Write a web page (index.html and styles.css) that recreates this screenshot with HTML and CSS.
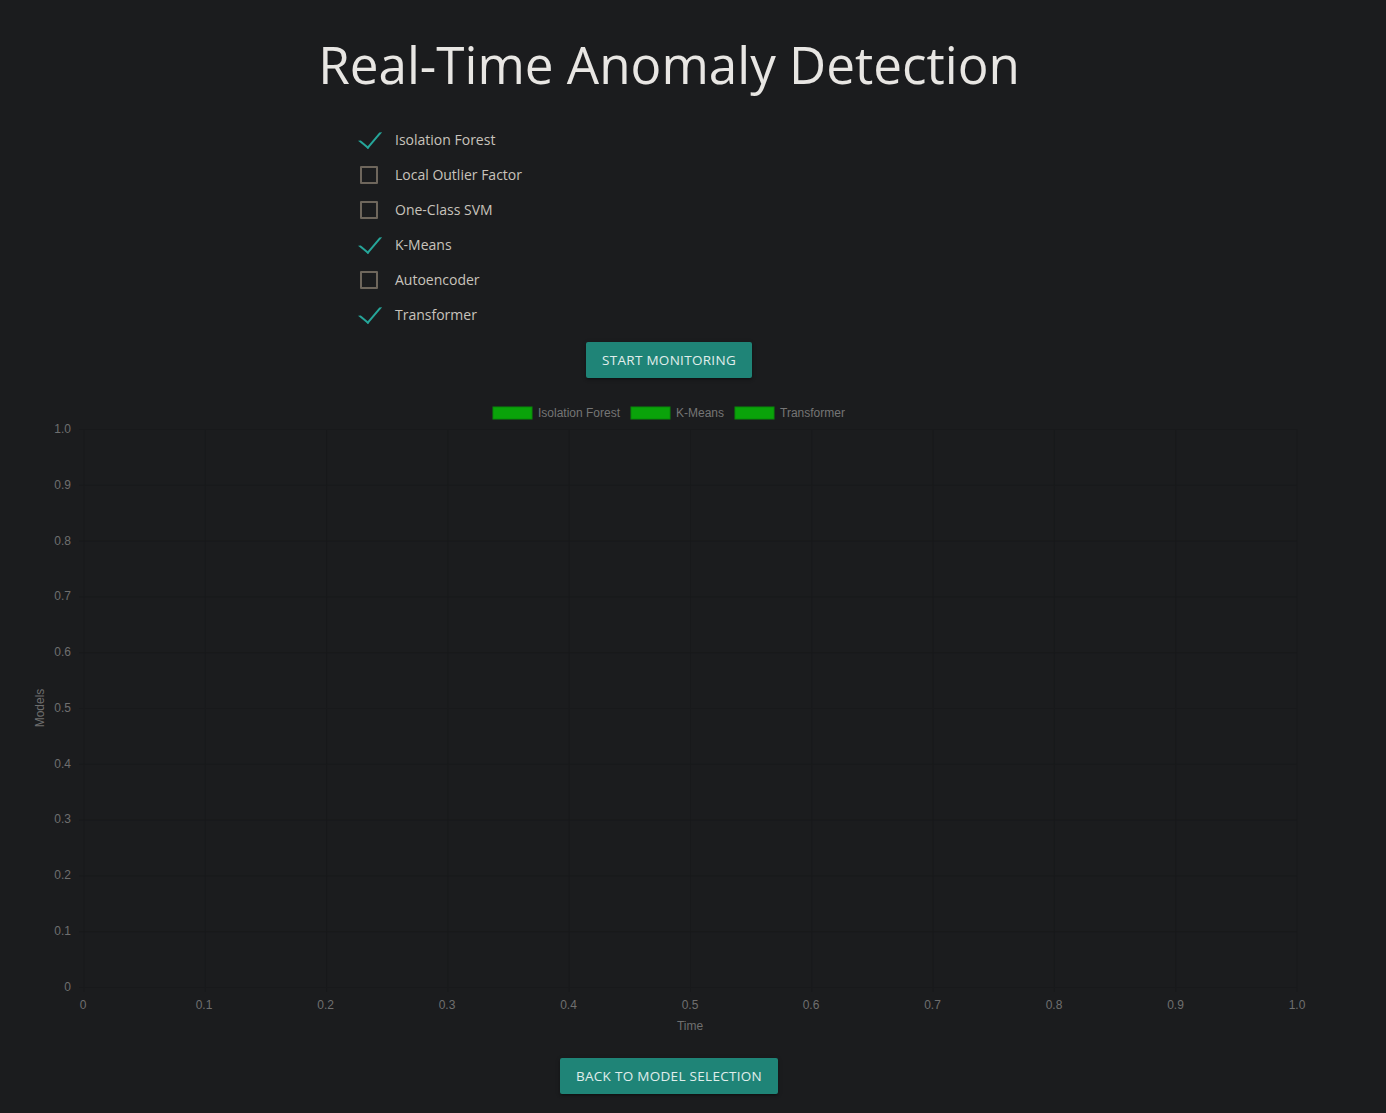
FILE: index.html
```html
<!DOCTYPE html>
<html lang="en">
<head>
<meta charset="utf-8">
<title>Real-Time Anomaly Detection</title>
<link rel="stylesheet" href="styles.css">
</head>
<body>
<div class="page">
  <h1 class="title">Real-Time Anomaly Detection</h1>

  <ul class="models">
    <li class="model"><span class="box checked"></span><span class="label">Isolation Forest</span></li>
    <li class="model"><span class="box"></span><span class="label">Local Outlier Factor</span></li>
    <li class="model"><span class="box"></span><span class="label">One-Class SVM</span></li>
    <li class="model"><span class="box checked"></span><span class="label">K-Means</span></li>
    <li class="model"><span class="box"></span><span class="label">Autoencoder</span></li>
    <li class="model"><span class="box checked"></span><span class="label">Transformer</span></li>
  </ul>

  <div class="actions">
    <button class="btn">Start Monitoring</button>
  </div>

  <svg class="chart" width="1338" height="650" viewBox="0 395 1338 650" xmlns="http://www.w3.org/2000/svg">
    <g class="legend">
      <rect x="493" y="407" width="39" height="12" fill="#0aa30a" stroke="#088a08" stroke-width="1"/>
      <text x="538" y="417">Isolation Forest</text>
      <rect x="631" y="407" width="39" height="12" fill="#0aa30a" stroke="#088a08" stroke-width="1"/>
      <text x="676" y="417">K-Means</text>
      <rect x="735" y="407" width="39" height="12" fill="#0aa30a" stroke="#088a08" stroke-width="1"/>
      <text x="780" y="417">Transformer</text>
    </g>
    <g class="grid">
      <line x1="84" y1="429" x2="84" y2="992"/>
      <line x1="205.3" y1="429" x2="205.3" y2="992"/>
      <line x1="326.6" y1="429" x2="326.6" y2="992"/>
      <line x1="447.9" y1="429" x2="447.9" y2="992"/>
      <line x1="569.2" y1="429" x2="569.2" y2="992"/>
      <line x1="690.5" y1="429" x2="690.5" y2="992"/>
      <line x1="811.8" y1="429" x2="811.8" y2="992"/>
      <line x1="933.1" y1="429" x2="933.1" y2="992"/>
      <line x1="1054.4" y1="429" x2="1054.4" y2="992"/>
      <line x1="1175.7" y1="429" x2="1175.7" y2="992"/>
      <line x1="1297" y1="429" x2="1297" y2="992"/>
      <line x1="79" y1="429.5" x2="1297" y2="429.5"/>
      <line x1="79" y1="485.3" x2="1297" y2="485.3"/>
      <line x1="79" y1="541.1" x2="1297" y2="541.1"/>
      <line x1="79" y1="596.9" x2="1297" y2="596.9"/>
      <line x1="79" y1="652.7" x2="1297" y2="652.7"/>
      <line x1="79" y1="708.5" x2="1297" y2="708.5"/>
      <line x1="79" y1="764.3" x2="1297" y2="764.3"/>
      <line x1="79" y1="820.1" x2="1297" y2="820.1"/>
      <line x1="79" y1="875.9" x2="1297" y2="875.9"/>
      <line x1="79" y1="931.7" x2="1297" y2="931.7"/>
      <line x1="79" y1="987.5" x2="1297" y2="987.5"/>
    </g>
    <g class="yticks">
      <text x="71" y="433">1.0</text>
      <text x="71" y="489">0.9</text>
      <text x="71" y="545">0.8</text>
      <text x="71" y="600">0.7</text>
      <text x="71" y="656">0.6</text>
      <text x="71" y="712">0.5</text>
      <text x="71" y="768">0.4</text>
      <text x="71" y="823">0.3</text>
      <text x="71" y="879">0.2</text>
      <text x="71" y="935">0.1</text>
      <text x="71" y="991">0</text>
    </g>
    <g class="xticks">
      <text x="83" y="1009">0</text>
      <text x="204" y="1009">0.1</text>
      <text x="325.6" y="1009">0.2</text>
      <text x="447" y="1009">0.3</text>
      <text x="568.5" y="1009">0.4</text>
      <text x="690" y="1009">0.5</text>
      <text x="811" y="1009">0.6</text>
      <text x="932.5" y="1009">0.7</text>
      <text x="1054" y="1009">0.8</text>
      <text x="1175.5" y="1009">0.9</text>
      <text x="1297" y="1009">1.0</text>
    </g>
    <text class="axis-title" x="690" y="1030">Time</text>
    <text class="axis-title" transform="translate(44 708) rotate(-90)" x="0" y="0">Models</text>
  </svg>

  <div class="actions back">
    <button class="btn">Back to Model Selection</button>
  </div>
</div>
</body>
</html>
```

FILE: styles.css
```css
html, body {
  margin: 0;
  padding: 0;
  background: #1b1c1e;
}

body {
  font-family: "Open Sans", "Noto Sans", sans-serif;
  color: #c8c3bc;
  height: 1113px;
  overflow: hidden;
}

.page {
  width: 1338px;
  display: flex;
  flex-direction: column;
}

.title {
  margin: 29px 0 0;
  font-size: 51.2px;
  font-weight: 400;
  line-height: 70px;
  text-align: center;
  color: #e8e6e3;
  letter-spacing: 0;
}

.models {
  list-style: none;
  margin: 23px 0 0 358px;
  padding: 0;
  display: flex;
  flex-direction: column;
}

.model {
  height: 35px;
  display: flex;
  align-items: center;
  position: relative;
}

.box {
  position: relative;
  width: 37px;
  height: 18px;
  flex: none;
}

.box::before {
  content: "";
  position: absolute;
  left: 2px;
  top: 0;
  width: 14px;
  height: 14px;
  border: 2px solid #6e665c;
  border-radius: 1px;
}

.box.checked::before {
  left: -3px;
  top: -4px;
  width: 9px;
  height: 18px;
  border-top: 2px solid transparent;
  border-left: 2px solid transparent;
  border-right: 2px solid #26a69a;
  border-bottom: 2px solid #26a69a;
  border-radius: 0;
  transform: rotate(40deg);
  transform-origin: 100% 100%;
}

.label {
  font-size: 14px;
  line-height: 20px;
  color: #c8c3bc;
}

.actions {
  display: flex;
  justify-content: center;
  margin-top: 10px;
}

.actions.back {
  margin-top: 13px;
}

.btn {
  height: 36px;
  padding: 0 16px;
  border: none;
  border-radius: 2px;
  background: #1f8477;
  color: #e0eeec;
  font-family: "Open Sans", "Noto Sans", sans-serif;
  font-size: 13.5px;
  letter-spacing: 0.3px;
  text-transform: uppercase;
  box-shadow: 0 2px 2px 0 rgba(0,0,0,0.14), 0 3px 1px -2px rgba(0,0,0,0.12), 0 1px 5px 0 rgba(0,0,0,0.2);
  cursor: pointer;
}

.btn.wide {
  letter-spacing: 0.4px;
}

.chart {
  display: block;
  margin-top: 17px;
  font-family: "Liberation Sans", Arial, sans-serif;
  font-size: 12px;
}

.chart text {
  fill: #6f6f6f;
}

.legend text {
  fill: #757575;
}

.grid line {
  stroke: #18191b;
  stroke-width: 1;
}

.yticks text {
  text-anchor: end;
}

.xticks text {
  text-anchor: middle;
}

.axis-title {
  text-anchor: middle;
}
```
